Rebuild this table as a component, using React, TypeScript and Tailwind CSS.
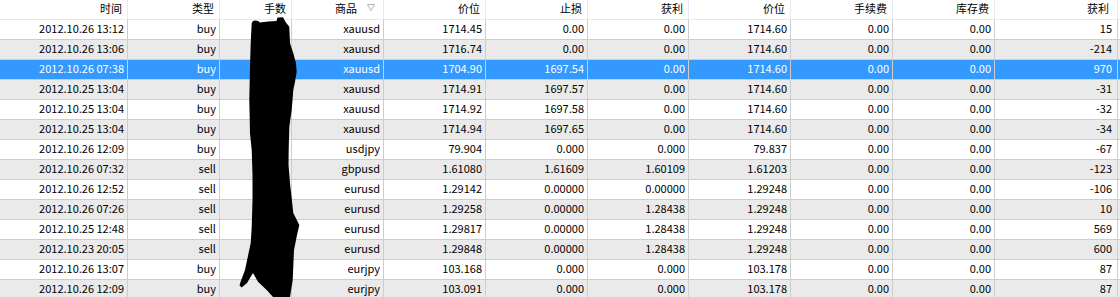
import React from "react";

const cols = [
  "w-[128px]",
  "w-[92px]",
  "w-[72px]",
  "w-[92px]",
  "w-[102px]",
  "w-[102px]",
  "w-[101px]",
  "w-[102px]",
  "w-[102px]",
  "w-[102px]",
  "w-[123px]",
];

const headers = ["时间", "类型", "手数", "商品", "价位", "止损", "获利", "价位", "手续费", "库存费", "获利"];

type Row = string[];

const rows: Row[] = [
  ["2012.10.26 13:12", "buy", "", "xauusd", "1714.45", "0.00", "0.00", "1714.60", "0.00", "0.00", "15"],
  ["2012.10.26 13:06", "buy", "", "xauusd", "1716.74", "0.00", "0.00", "1714.60", "0.00", "0.00", "-214"],
  ["2012.10.26 07:38", "buy", "", "xauusd", "1704.90", "1697.54", "0.00", "1714.60", "0.00", "0.00", "970"],
  ["2012.10.25 13:04", "buy", "", "xauusd", "1714.91", "1697.57", "0.00", "1714.60", "0.00", "0.00", "-31"],
  ["2012.10.25 13:04", "buy", "", "xauusd", "1714.92", "1697.58", "0.00", "1714.60", "0.00", "0.00", "-32"],
  ["2012.10.25 13:04", "buy", "", "xauusd", "1714.94", "1697.65", "0.00", "1714.60", "0.00", "0.00", "-34"],
  ["2012.10.26 12:09", "buy", "", "usdjpy", "79.904", "0.000", "0.000", "79.837", "0.00", "0.00", "-67"],
  ["2012.10.26 07:32", "sell", "", "gbpusd", "1.61080", "1.61609", "1.60109", "1.61203", "0.00", "0.00", "-123"],
  ["2012.10.26 12:52", "sell", "", "eurusd", "1.29142", "0.00000", "0.00000", "1.29248", "0.00", "0.00", "-106"],
  ["2012.10.26 07:26", "sell", "", "eurusd", "1.29258", "0.00000", "1.28438", "1.29248", "0.00", "0.00", "10"],
  ["2012.10.25 12:48", "sell", "", "eurusd", "1.29817", "0.00000", "1.28438", "1.29248", "0.00", "0.00", "569"],
  ["2012.10.23 20:05", "sell", "", "eurusd", "1.29848", "0.00000", "1.28438", "1.29248", "0.00", "0.00", "600"],
  ["2012.10.26 13:07", "buy", "", "eurjpy", "103.168", "0.000", "0.000", "103.178", "0.00", "0.00", "87"],
  ["2012.10.26 12:09", "buy", "", "eurjpy", "103.091", "0.000", "0.000", "103.178", "0.00", "0.00", "87"],
];

const blobPath =
  "M251.7,23 L253,21 L255,20.5 L258,21 L260,22.5 L268,21.5 L276.5,21 L277.5,17.5 L283,17.2 L284.5,20 L285.5,22 L289.3,26.7 L290,43.3 L293.3,53.3 L296,63.3 L296.7,71.7 L295,81.7 L293.3,90 L291.7,110 L289.3,126.7 L288.7,150 L288.5,165 L290,183 L293.3,213 L299.3,225 L297,235 L294,250 L292.7,280 L290,297 L273,297 L266.7,290 L258,281.7 L253,273 L247,283 L241.7,287.5 L239.5,285.5 L240.5,282 L245,270 L250.7,243 L251.7,227 L252.5,200 L252.5,175 L251.7,150 L250,133.3 L249.3,100 L250,66.7 L250.7,43.3 Z";

function SortIcon() {
  return (
    <svg width="8" height="7" viewBox="0 0 8 7" className="ml-[10px] mr-[8px] mt-[4px]">
      <path d="M0.5,0.5 L7.5,0.5 L4,6.5 Z" fill="none" stroke="#b4b4b4" strokeWidth="1" />
    </svg>
  );
}

export default function App() {
  return (
    <div className="relative w-[1120px] h-[297px] overflow-hidden bg-white text-black text-[11px] font-['Noto_Sans_CJK_SC','Noto_Sans',sans-serif]">
      <div className="flex h-[20px] border-b border-[#e4e9ef] bg-white">
        {headers.map((h, i) => (
          <div
            key={i}
            className={`${cols[i]} shrink-0 h-[19px] border-r border-[#e2eaf3] flex justify-end items-start leading-[16px] ${
              i === 3 ? "pr-0" : i === 10 ? "pr-[8px]" : "pr-[5px]"
            }`}
          >
            <span>{h}</span>
            {i === 3 && <SortIcon />}
          </div>
        ))}
      </div>
      {rows.map((r, ri) => {
        const selected = ri === 2;
        const bg = selected ? "bg-[#3399ff] text-white" : ri % 2 === 1 ? "bg-[#eaeaea]" : "bg-white";
        return (
          <div key={ri} className={`flex h-[20px] border-b border-[#cdcdcd] ${bg}`}>
            {r.map((c, ci) => (
              <div
                key={ci}
                className={`${cols[ci]} shrink-0 h-[19px] border-r border-[#cdcdcd] text-right leading-[17px] whitespace-nowrap overflow-hidden ${
                  ci === 10 ? "pr-[5px]" : "pr-[3px]"
                }`}
              >
                {c}
              </div>
            ))}
          </div>
        );
      })}
      <svg className="absolute left-0 top-0 pointer-events-none" width="1120" height="297" viewBox="0 0 1120 297">
        <path d={blobPath} fill="#000" />
      </svg>
    </div>
  );
}
